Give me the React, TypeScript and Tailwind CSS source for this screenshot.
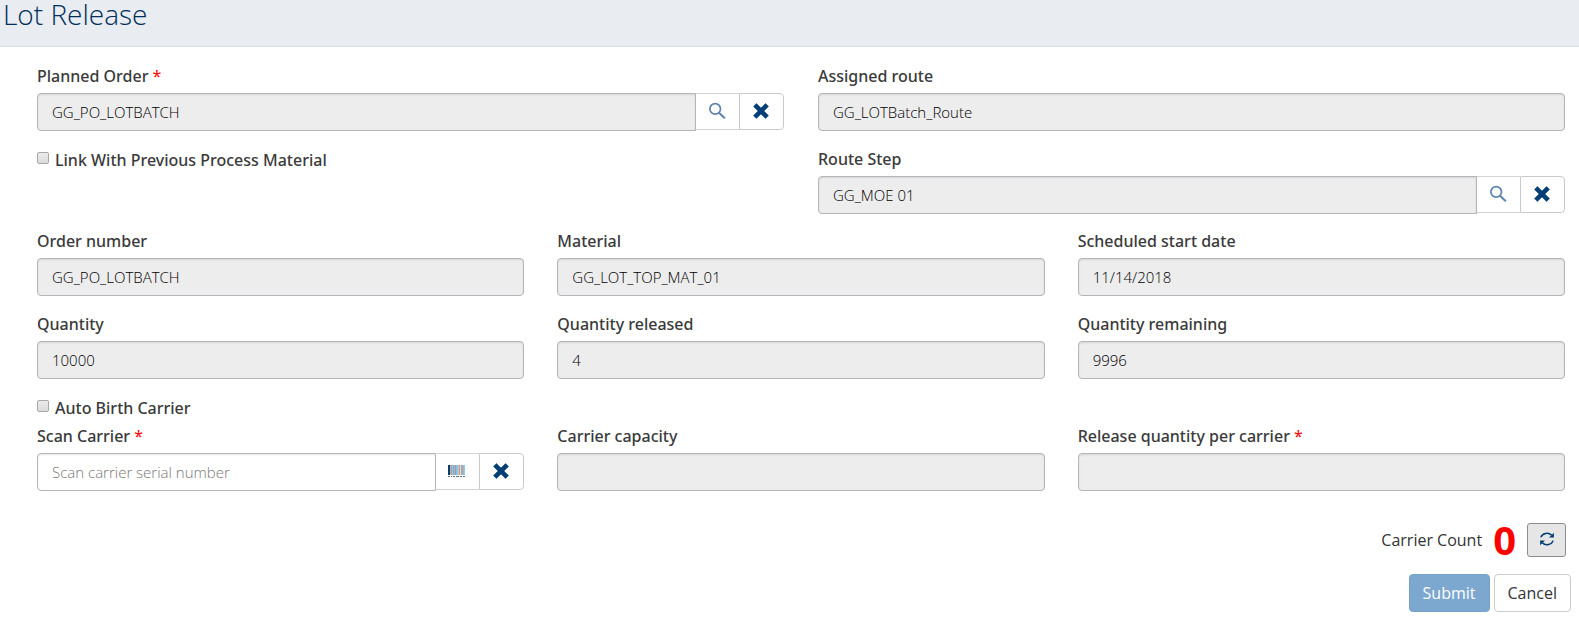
import React, { useState } from "react";

const inputBase =
  "block h-[38px] w-full min-w-0 border border-[#b3b5b8] px-3.5 text-[15px] leading-5 font-light text-black outline-none placeholder:text-[#777] placeholder:opacity-100 shadow-[inset_0_1px_2px_rgba(0,0,0,0.1)]";

const labelText = "text-base leading-6 font-medium font-['Noto_Sans','Open_Sans',sans-serif] text-[#3a3a3a]";

function Label({ htmlFor, text, required }: { htmlFor: string; text: string; required?: boolean }) {
  return (
    <label htmlFor={htmlFor} className={`mb-[5px] block ${labelText}`}>
      {text}
      {required && <span className="font-normal text-[#ff0000]"> *</span>}
    </label>
  );
}

type FieldProps = {
  id: string;
  label: string;
  value?: string;
  placeholder?: string;
  required?: boolean;
  editable?: boolean;
  addon?: React.ReactNode;
  addonLabel?: string;
};

function Field({ id, label, value = "", placeholder, required, editable, addon, addonLabel }: FieldProps) {
  const [text, setText] = useState(value);
  return (
    <div className="min-w-0">
      <Label htmlFor={id} text={label} required={required} />
      <div className="flex items-start">
        <input
          id={id}
          type="text"
          value={text}
          placeholder={placeholder}
          readOnly={!editable}
          onChange={(e) => setText(e.target.value)}
          className={`${inputBase} ${addon ? "rounded-l" : "rounded"} ${editable ? "bg-white" : "bg-[#ededed]"}`}
        />
        {addon && (
          <>
            <button
              type="button"
              aria-label={addonLabel}
              className="flex h-[37px] w-[43px] shrink-0 items-center justify-center border-y border-[#d3d3d3] bg-white pr-0.5 pb-0.5"
            >
              {addon}
            </button>
            <button
              type="button"
              aria-label={`Clear ${label}`}
              onClick={() => setText("")}
              className="flex h-[37px] w-[45px] shrink-0 items-center justify-center rounded-r border border-[#cacaca] bg-white pr-0.5 pb-0.5"
            >
              <ClearIcon />
            </button>
          </>
        )}
      </div>
    </div>
  );
}

function ClearIcon() {
  return (
    <svg width="16" height="16" viewBox="0 0 16 16" aria-hidden="true">
      <path
        d="M3.4 0.5 8 5.1l4.6-4.6L15.5 3.4 10.9 8l4.6 4.6-2.9 2.9L8 10.9l-4.6 4.6L0.5 12.6 5.1 8 0.5 3.4Z"
        fill="#033f76"
        stroke="#033f76"
        strokeWidth="0.6"
        strokeLinejoin="round"
      />
    </svg>
  );
}

function SearchIcon() {
  return (
    <svg width="18" height="18" viewBox="0 0 18 18" fill="none" stroke="#5b83ae" aria-hidden="true">
      <circle cx="7.2" cy="6.9" r="5.3" strokeWidth="1.7" />
      <path d="m11 10.7 5.8 5.6" strokeWidth="2" />
    </svg>
  );
}

const bars = [
  "#033f76", "#16395c", "#7cc4f4", "#d39a78", "#83c8f5", "#a9a3a3", "#7cc4f4", "#c98e70", "#7cc4f4",
  "#8ccaf2", "#e3b79f", "#b9a3a4", "#f1d9cb", "#8fb0cc", "#cf987c", "#7cc4f4", "#8ccaf2",
];

function BarcodeIcon() {
  return (
    <svg width="17" height="12" viewBox="0 0 17 12" shapeRendering="crispEdges" aria-hidden="true">
      {bars.map((color, x) => (
        <rect key={x} x={x} y="0" width="1" height="10" fill={color} />
      ))}
      <path d="M0 11.5h2m1 0h1m1 0h2m1 0h3m1 0h2m1 0h2" stroke="#56708c" strokeWidth="1" />
    </svg>
  );
}

function RefreshIcon() {
  return (
    <svg width="16" height="14" viewBox="0 0 16 14" aria-hidden="true">
      <path d="M1.9 5.4A6.3 5.6 0 0 1 12.6 3.1M14.1 8.6A6.3 5.6 0 0 1 3.4 10.9" fill="none" stroke="#033f76" strokeWidth="1.5" />
      <path d="M14.9 0.8v4.6h-4.9ZM1.1 13.2V8.6h4.9Z" fill="#033f76" />
    </svg>
  );
}

function CheckField({ id, label }: { id: string; label: string }) {
  return (
    <div className="flex items-start gap-[6px] pt-px">
      <input
        id={id}
        type="checkbox"
        className="mt-1 size-3 shrink-0 appearance-none rounded-[2px] border border-[#a8a8a8] bg-linear-to-b from-[#ececec] to-[#dadada] checked:bg-[#033f76] checked:bg-none"
      />
      <label htmlFor={id} className={labelText}>
        {label}
      </label>
    </div>
  );
}

export default function App() {
  return (
    <div className="min-h-screen bg-white font-['Open_Sans',sans-serif] text-[#333]">
      <header className="h-[47px] border-b border-[#d9dde3] bg-[#e9ecf1] pl-[3px]">
        <h1 className="text-[28px] leading-7 font-light text-[#002f5a]">Lot Release</h1>
      </header>

      <form onSubmit={(e) => e.preventDefault()}>
        <div className="pt-[17px] pr-3.5 pl-[37px]">
          <div className="grid grid-cols-2 gap-x-[34px] gap-y-4">
            <Field id="planned" label="Planned Order" required value="GG_PO_LOTBATCH" addon={<SearchIcon />} addonLabel="Find planned order" />
            <Field id="route" label="Assigned route" value="GG_LOTBatch_Route" />
            <CheckField id="link" label="Link With Previous Process Material" />
            <Field id="step" label="Route Step" value="GG_MOE 01" addon={<SearchIcon />} addonLabel="Find route step" />
          </div>

          <div className="mt-[15px] grid grid-cols-3 gap-x-[33px] gap-y-4">
            <Field id="order" label="Order number" value="GG_PO_LOTBATCH" />
            <Field id="material" label="Material" value="GG_LOT_TOP_MAT_01" />
            <Field id="start" label="Scheduled start date" value="11/14/2018" />
            <Field id="qty" label="Quantity" value="10000" />
            <Field id="released" label="Quantity released" value="4" />
            <Field id="remaining" label="Quantity remaining" value="9996" />
          </div>

          <div className="mt-4">
            <CheckField id="birth" label="Auto Birth Carrier" />
          </div>

          <div className="mt-1 grid grid-cols-3 gap-x-[33px]">
            <Field
              id="scan"
              label="Scan Carrier"
              required
              editable
              placeholder="Scan carrier serial number"
              addon={<BarcodeIcon />}
              addonLabel="Scan barcode"
            />
            <Field id="capacity" label="Carrier capacity" />
            <Field id="release" label="Release quantity per carrier" required />
          </div>
        </div>

        <div className="mt-8 flex items-center justify-end pr-[13px]">
          <span className="text-base leading-6">Carrier Count</span>
          <output className="ml-[11px] text-[40px] leading-[34px] font-bold text-[#ff0000]">0</output>
          <button
            type="button"
            aria-label="Refresh carrier count"
            className="ml-[11px] flex h-[34px] w-[39px] items-center justify-center rounded-[3px] border border-[#8c8c8c] bg-[#e6e6e6] pb-0.5"
          >
            <RefreshIcon />
          </button>
        </div>

        <div className="mt-[17px] flex justify-end gap-1 pr-2 pb-8">
          <button type="submit" className="h-[38px] rounded border border-[#74a2ca] bg-[#7ca8d0] px-[13px] text-base leading-6 text-white">
            Submit
          </button>
          <button type="button" className="h-[38px] rounded border border-[#cccccc] bg-white px-[13px] text-base leading-6">
            Cancel
          </button>
        </div>
      </form>
    </div>
  );
}
